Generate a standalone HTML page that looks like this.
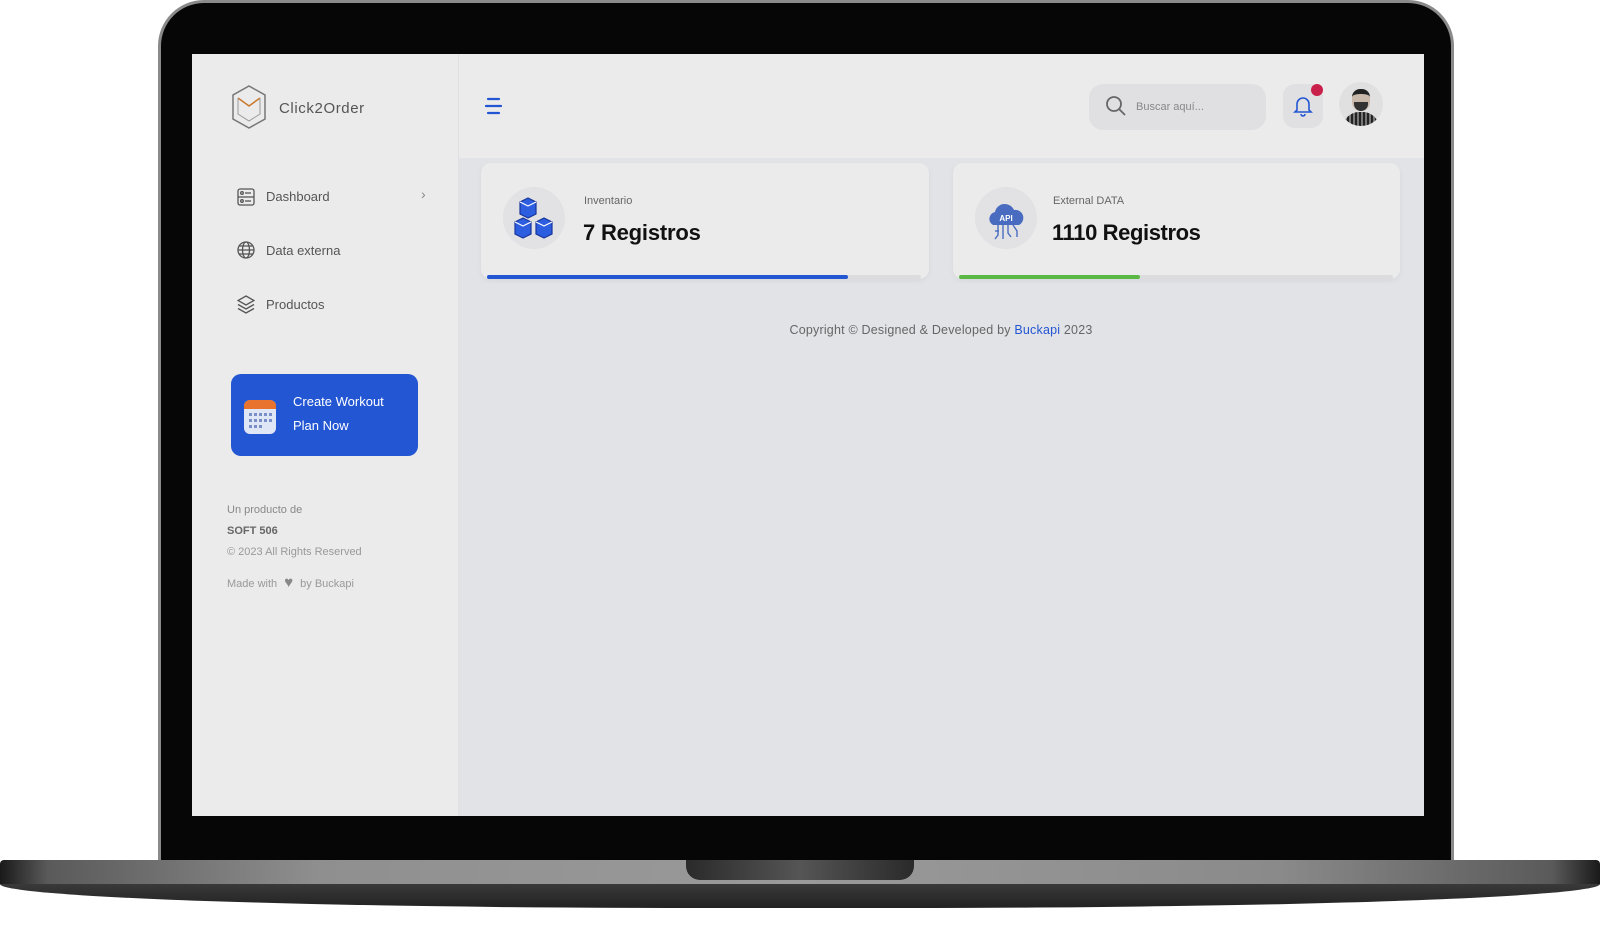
<!DOCTYPE html>
<html><head><meta charset="utf-8"><style>
*{margin:0;padding:0;box-sizing:border-box}
body{width:1600px;height:932px;background:#fff;position:relative;overflow:hidden;font-family:"Liberation Sans",sans-serif}
.a{position:absolute}
.lid{left:158px;top:0;width:1296px;height:870px;background:#060606;border-radius:46px 46px 0 0;border:3px solid #8a8a8a;border-bottom:none}
.scr{left:192px;top:54px;width:1232px;height:762px;background:#e2e3e7;overflow:hidden}
.side{left:0;top:0;width:267px;height:762px;background:#ebebeb;border-right:1px solid #e0e0e3}
.head{left:267px;top:0;width:965px;height:104px;background:#ebebeb}
.t{position:absolute;white-space:nowrap}
.menu{color:#555;font-size:13px}
.card{position:absolute;top:109px;height:116px;background:#ebebeb;border-radius:10px;box-shadow:0 2px 6px rgba(0,0,0,.05)}
.circ{position:absolute;left:22px;top:24px;width:62px;height:62px;border-radius:50%;background:#e2e2e4}
.bar{position:absolute;left:6px;bottom:0;height:4px;border-radius:2px}
.foot{color:#888;font-size:11px}
</style></head><body>
<div class="a lid"></div>
<div class="a" style="left:0;top:860px;width:1600px;height:24px;background:linear-gradient(90deg,#1a1a1a 0%,#5a5a5a 3%,#8f8f8f 20%,#9a9a9a 50%,#8a8a8a 80%,#5a5a5a 97%,#1a1a1a 100%);border-radius:4px 4px 0 0"></div>
<div class="a" style="left:0;top:884px;width:1600px;height:24px;background:linear-gradient(#3a3a3a,#222);border-radius:0 0 700px 700px / 0 0 24px 24px"></div>
<div class="a" style="left:686px;top:860px;width:228px;height:20px;background:linear-gradient(90deg,#2a2a2a,#555 50%,#2a2a2a);border-radius:0 0 14px 14px"></div>
<div class="a scr">
 <div class="a side">
  <svg class="a" style="left:38px;top:30px" width="38" height="46" viewBox="0 0 38 46"><path d="M19 2 L35 11 V35 L19 44 L3 35 V11 Z" fill="none" stroke="#777" stroke-width="1.5"/><path d="M8 14 L19 22 L30 14" fill="none" stroke="#c8782a" stroke-width="1.5"/><path d="M8 14 V30 L19 37 L30 30 V14" fill="none" stroke="#999" stroke-width="1"/></svg>
  <div class="t" style="left:87px;top:46px;font-size:15px;color:#555;letter-spacing:.6px">Click2Order</div>
  <svg class="a" style="left:45px;top:134px" width="18" height="18" viewBox="0 0 18 18" fill="none" stroke="#555" stroke-width="1.3"><rect x="1" y="1" width="16" height="16" rx="2"/><line x1="1" y1="9" x2="17" y2="9"/><circle cx="5" cy="5" r="1.3"/><circle cx="5" cy="13" r="1.3"/><line x1="8" y1="5" x2="14" y2="5"/><line x1="8" y1="13" x2="14" y2="13"/></svg>
  <div class="t menu" style="left:74px;top:135px">Dashboard</div>
  <div class="t" style="left:229px;top:132px;color:#888;font-size:14px">›</div>
  <svg class="a" style="left:45px;top:187px" width="18" height="18" viewBox="0 0 18 18" fill="none" stroke="#555" stroke-width="1.3"><circle cx="9" cy="9" r="8"/><ellipse cx="9" cy="9" rx="3.5" ry="8"/><line x1="1" y1="9" x2="17" y2="9"/><line x1="2.5" y1="5" x2="15.5" y2="5"/><line x1="2.5" y1="13" x2="15.5" y2="13"/></svg>
  <div class="t menu" style="left:74px;top:189px">Data externa</div>
  <svg class="a" style="left:45px;top:241px" width="18" height="19" viewBox="0 0 18 19" fill="none" stroke="#555" stroke-width="1.3"><path d="M9 1 L17 5.5 L9 10 L1 5.5 Z"/><path d="M1 9.5 L9 14 L17 9.5"/><path d="M1 13.5 L9 18 L17 13.5"/></svg>
  <div class="t menu" style="left:74px;top:243px">Productos</div>
  <div class="a" style="left:39px;top:320px;width:187px;height:82px;background:#2356d3;border-radius:10px"></div>
  <svg class="a" style="left:50px;top:340px" width="36" height="42" viewBox="0 0 36 42"><rect x="2" y="6" width="32" height="34" rx="6" fill="#dfe6f5"/><path d="M2 12 a6 6 0 0 1 6-6 h20 a6 6 0 0 1 6 6 v3 H2z" fill="#e8732e"/><g fill="#7a8fc8"><rect x="7" y="19" width="3" height="3"/><rect x="12" y="19" width="3" height="3"/><rect x="17" y="19" width="3" height="3"/><rect x="22" y="19" width="3" height="3"/><rect x="27" y="19" width="3" height="3"/><rect x="7" y="25" width="3" height="3"/><rect x="12" y="25" width="3" height="3"/><rect x="17" y="25" width="3" height="3"/><rect x="22" y="25" width="3" height="3"/><rect x="27" y="25" width="3" height="3"/><rect x="7" y="31" width="3" height="3"/><rect x="12" y="31" width="3" height="3"/><rect x="17" y="31" width="3" height="3"/></g></svg>
  <div class="t" style="left:101px;top:340px;color:#fff;font-size:13px">Create Workout</div>
  <div class="t" style="left:101px;top:364px;color:#fff;font-size:13px">Plan Now</div>
  <div class="t foot" style="left:35px;top:450px">Un producto de</div>
  <div class="t foot" style="left:35px;top:471px;font-weight:bold;color:#666">SOFT 506</div>
  <div class="t foot" style="left:35px;top:492px;color:#999">© 2023 All Rights Reserved</div>
  <div class="t foot" style="left:35px;top:520px;color:#999">Made with <span style="color:#888;font-size:15px;margin:0 4px">♥</span> by Buckapi</div>
 </div>
 <div class="a head">
  <svg class="a" style="left:24px;top:42px" width="20" height="20" viewBox="0 0 20 20" stroke="#2356d3" stroke-width="2.2" stroke-linecap="round"><line x1="5" y1="3" x2="16" y2="3"/><line x1="3" y1="10" x2="18" y2="10"/><line x1="5" y1="17" x2="16" y2="17"/></svg>
  <div class="a" style="left:630px;top:30px;width:177px;height:46px;background:#e0e0e3;border-radius:14px"></div>
  <svg class="a" style="left:646px;top:41px" width="22" height="22" viewBox="0 0 22 22" fill="none" stroke="#666" stroke-width="1.8"><circle cx="9" cy="9" r="7"/><line x1="14" y1="14" x2="20" y2="20"/></svg>
  <div class="t" style="left:677px;top:47px;font-size:11px;color:#888">Buscar aquí...</div>
  <div class="a" style="left:824px;top:30px;width:40px;height:44px;background:#e0e0e3;border-radius:12px"></div>
  <svg class="a" style="left:834px;top:41px" width="20" height="22" viewBox="0 0 20 22" fill="none" stroke="#2356d3" stroke-width="1.6"><path d="M4 15 V9 a6 6 0 0 1 12 0 V15 L18 17 H2 Z"/><path d="M8 19 a2 2 0 0 0 4 0"/></svg>
  <div class="a" style="left:852px;top:30px;width:12px;height:12px;border-radius:50%;background:#c8204a"></div>
  <div class="a" style="left:880px;top:28px;width:44px;height:44px;border-radius:50%;background:#e0e0e0;overflow:hidden">
   <div class="a" style="left:13px;top:7px;width:18px;height:22px;border-radius:9px 9px 10px 10px;background:#c9b9aa;border-top:5px solid #222"></div>
   <div class="a" style="left:15px;top:20px;width:14px;height:9px;border-radius:0 0 7px 7px;background:#333"></div>
   <div class="a" style="left:4px;top:30px;width:36px;height:20px;border-radius:16px 16px 0 0;background:repeating-linear-gradient(90deg,#222 0 2px,#777 2px 4px)"></div>
  </div>
 </div>
 <div class="card" style="left:289px;width:448px">
  <div class="circ"></div>
  <svg class="a" style="left:33px;top:33px" width="42" height="46" viewBox="0 0 42 46" stroke="#17359a" stroke-width="1.2"><path d="M14 2 l8 4 v12 l-8 4 l-8-4 V6z" fill="#2e5ee0"/><path d="M6 6 l8 4 l8-4" fill="none" stroke="#fff"/><path d="M9 22 l8 4 v12 l-8 4 l-8-4 V26z" fill="#2e5ee0"/><path d="M1 26 l8 4 l8-4" fill="none" stroke="#fff"/><path d="M30 22 l8 4 v12 l-8 4 l-8-4 V26z" fill="#2e5ee0"/><path d="M22 26 l8 4 l8-4" fill="none" stroke="#fff"/></svg>
  <div class="t" style="left:103px;top:32px;font-size:11px;color:#666">Inventario</div>
  <div class="t" style="left:102px;top:57px;font-size:22px;font-weight:bold;color:#111;letter-spacing:-.2px">7 Registros</div>
  <div class="bar" style="width:434px;background:#dcdcdf"></div>
  <div class="bar" style="width:361px;background:#2356d3"></div>
 </div>
 <div class="card" style="left:761px;width:447px">
  <div class="circ"></div>
  <svg class="a" style="left:32px;top:38px" width="42" height="42" viewBox="0 0 42 42"><path d="M8 24 a7 7 0 0 1 2-13 a10 10 0 0 1 19-2 a8 8 0 0 1 5 15z" fill="#4a6cc0"/><text x="21" y="20" font-size="8" font-weight="bold" fill="#fff" text-anchor="middle" font-family="Liberation Sans">API</text><g stroke="#4a6cc0" stroke-width="1.4" fill="none"><path d="M13 24 v10 l-3 4"/><path d="M18 24 v14"/><path d="M23 24 v8 l3 4"/><path d="M28 24 l4 6 v6"/><path d="M10 30 h4"/></g></svg>
  <div class="t" style="left:100px;top:32px;font-size:11px;color:#666">External DATA</div>
  <div class="t" style="left:99px;top:57px;font-size:22px;font-weight:bold;color:#111;letter-spacing:-.4px">1110 Registros</div>
  <div class="bar" style="width:434px;background:#dcdcdf"></div>
  <div class="bar" style="width:181px;background:#5ab845"></div>
 </div>
 <div class="t" style="left:749px;top:269px;width:0;font-size:12.5px;color:#666;display:flex;justify-content:center;letter-spacing:.2px"><span>Copyright © Designed &amp; Developed by <span style="color:#2356d3">Buckapi</span> 2023</span></div>
</div>
</body></html>
